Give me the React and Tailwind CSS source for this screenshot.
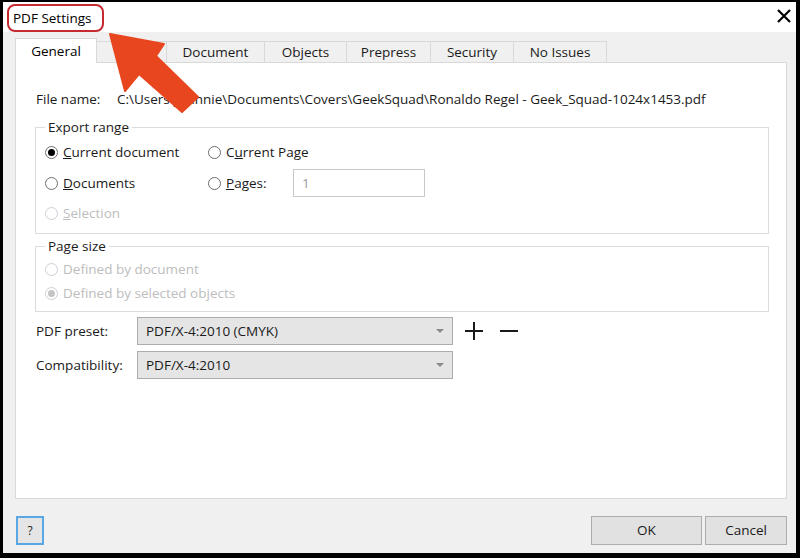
import React from "react";

const Radio = ({ checked, disabled }) => (
  <span
    className={`w-[13px] h-[13px] shrink-0 rounded-full border bg-white flex items-center justify-center ${
      disabled ? "border-[#cfcfcf]" : "border-[#6e6e6e]"
    }`}
  >
    {checked && (
      <span
        className={`w-[7px] h-[7px] rounded-full ${disabled ? "bg-[#c4c4c4]" : "bg-black"}`}
      />
    )}
  </span>
);

const Option = ({ checked, disabled, children, className = "" }) => (
  <label className={`flex items-center gap-[5px] ${disabled ? "text-[#bdbdbd]" : "text-[#1a1a1a]"} ${className}`}>
    <Radio checked={checked} disabled={disabled} />
    <span>{children}</span>
  </label>
);

const Select = ({ value }) => (
  <div className="w-[316px] h-[28px] bg-[#e5e5e5] border border-[#acacac] flex items-center justify-between pl-[8px] pr-[8px]">
    <span>{value}</span>
    <svg width="8" height="5" viewBox="0 0 8 5">
      <polygon points="0,0 8,0 4,4" fill="#8a8a8a" />
    </svg>
  </div>
);

const tabs = [
  ["General", "w-[82px]"],
  ["Color", "w-[70px]"],
  ["Document", "w-[98px]"],
  ["Objects", "w-[82px]"],
  ["Prepress", "w-[84px]"],
  ["Security", "w-[83px]"],
  ["No Issues", "w-[93px]"],
];

export default function App() {
  return (
    <div
      className="relative w-[800px] h-[558px] bg-black pt-[2px] pl-[3px] pr-[4px] pb-[5px] flex text-[13.5px] text-[#1a1a1a]"
      style={{ fontFamily: '"Open Sans", "Noto Sans", sans-serif' }}
    >
      <div className="flex-1 flex flex-col bg-[#f0f0f0]">
        {/* title bar */}
        <div className="h-[30px] bg-white flex items-start justify-between">
          <div className="ml-[4px] mt-[2px] h-[28px] w-[97px] border-2 border-[#c42a30] rounded-[8px] px-[4px] flex items-center">
            <span className="text-[13.5px] text-black">PDF Settings</span>
          </div>
          <svg className="mt-[6px] mr-[4px]" width="16" height="16" viewBox="0 0 16 16">
            <path d="M2 2 L14 14 M14 2 L2 14" stroke="#000" strokeWidth="2.2" />
          </svg>
        </div>

        <div className="flex-1 flex flex-col pt-[6px] pl-[12px] pr-[9px]">
          {/* tabs */}
          <div className="flex items-end h-[24px]">
            {tabs.map(([t, w], i) =>
              i === 0 ? (
                <div
                  key={t}
                  className={`${w} h-[25px] -mb-px relative z-10 bg-white border border-b-0 border-[#d9d9d9] flex items-center justify-center text-black`}
                >
                  {t}
                </div>
              ) : (
                <div
                  key={t}
                  className={`${w} h-[21px] bg-[#f0f0f0] border border-b-0 border-l-0 border-[#d9d9d9] flex items-center justify-center`}
                >
                  {t}
                </div>
              )
            )}
          </div>

          {/* panel */}
          <div className="flex-1 bg-white border border-[#d9d9d9] pt-[27px] pl-[19px] pr-[17px]">
            <div className="flex h-[18px] items-center whitespace-nowrap">
              <span className="w-[81px] ml-px">File name:</span>
              <span>C:\Users\Johnnie\Documents\Covers\GeekSquad\Ronaldo Regel - Geek_Squad-1024x1453.pdf</span>
            </div>

            <fieldset className="mt-[10px] border border-[#dcdcdc] pl-[9px] pb-[9px]">
              <legend className="px-[3px] leading-[18px]">Export range</legend>
              <div className="flex items-center h-[22px] mt-[5px]">
                <Option checked className="w-[163px]">
                  <span className="underline">C</span>urrent document
                </Option>
                <Option>
                  C<span className="underline">u</span>rrent Page
                </Option>
              </div>
              <div className="flex items-center h-[28px] mt-[6px]">
                <Option className="w-[163px]">
                  <span className="underline">D</span>ocuments
                </Option>
                <Option className="w-[85px]">
                  <span className="underline">P</span>ages:
                </Option>
                <div className="w-[132px] h-[28px] border border-[#c8c8c8] flex items-center pl-[8px] text-[#9a9a9a]">
                  1
                </div>
              </div>
              <div className="flex items-center h-[22px] mt-[5px]">
                <Option disabled>
                  <span className="underline">S</span>election
                </Option>
              </div>
            </fieldset>

            <fieldset className="mt-[3px] border border-[#dcdcdc] pl-[9px] pb-[7px]">
              <legend className="px-[3px] leading-[18px]">Page size</legend>
              <div className="flex items-center h-[22px] mt-[3px]">
                <Option disabled>Defined by document</Option>
              </div>
              <div className="flex items-center h-[22px] mt-[2px]">
                <Option disabled checked>
                  Defined by selected objects
                </Option>
              </div>
            </fieldset>

            <div className="flex items-center mt-[5px] -ml-[18px]">
              <span className="w-[101px] ml-[19px]">PDF preset:</span>
              <Select value="PDF/X-4:2010 (CMYK)" />
              <svg className="ml-[11px]" width="20" height="20" viewBox="0 0 20 20">
                <path d="M10 1 V19 M1 10 H19" stroke="#1a1a1a" strokeWidth="2" />
              </svg>
              <svg className="ml-[15px]" width="20" height="20" viewBox="0 0 20 20">
                <path d="M1 10 H19" stroke="#1a1a1a" strokeWidth="2" />
              </svg>
            </div>
            <div className="flex items-center mt-[6px] -ml-[18px]">
              <span className="w-[101px] ml-[19px]">Compatibility:</span>
              <Select value="PDF/X-4:2010" />
            </div>
          </div>

          {/* footer */}
          <div className="flex items-center justify-between pt-[17px] pb-[8px]">
            <button className="w-[28px] h-[29px] ml-[1px] bg-[#e5e5e5] border-2 border-[#5aa7e4] flex items-center justify-center text-[12px]">
              ?
            </button>
            <div className="flex gap-[3px]">
              <button className="w-[111px] h-[29px] bg-[#e1e1e1] border border-[#adadad]">OK</button>
              <button className="w-[82px] h-[29px] bg-[#e1e1e1] border border-[#adadad]">Cancel</button>
            </div>
          </div>
        </div>
      </div>

      {/* annotation arrow */}
      <svg className="absolute left-0 top-0 pointer-events-none" width="800" height="558">
        <polygon
          points="110,34 164,44 156,56 198,97 182,112 139,74 125,91"
          fill="#e8461e"
          stroke="#e8461e"
          strokeWidth="2"
          strokeLinejoin="round"
        />
      </svg>
    </div>
  );
}
